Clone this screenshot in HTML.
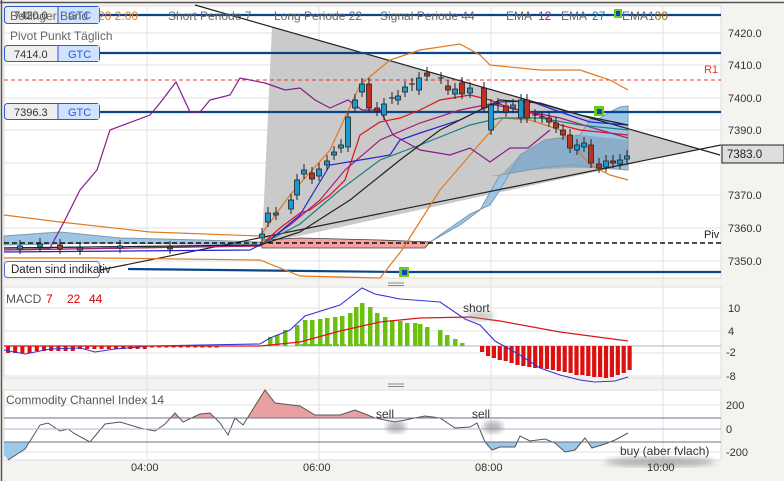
<!DOCTYPE html>
<html><head><meta charset="utf-8"><style>
html,body{margin:0;padding:0;background:#f4f3ef;}
svg{display:block;font-family:"Liberation Sans",sans-serif;}
</style></head><body>
<svg id="s" width="784" height="481" viewBox="0 0 784 481" xmlns="http://www.w3.org/2000/svg">
<rect x="0" y="0" width="784" height="481" fill="#f4f3ef"/>
<line x1="0" y1="2.5" x2="784" y2="2.5" stroke="#555" stroke-width="1.5"/>
<line x1="1.5" y1="0" x2="1.5" y2="481" stroke="#555" stroke-width="1.5"/>
<rect x="4" y="6" width="717" height="272" fill="#fff" stroke="#ddd"/>
<g stroke="#e2e2e2" stroke-width="1">
<line x1="4" y1="33" x2="721" y2="33"/><line x1="4" y1="65" x2="721" y2="65"/><line x1="4" y1="98" x2="721" y2="98"/><line x1="4" y1="130" x2="721" y2="130"/><line x1="4" y1="163" x2="721" y2="163"/><line x1="4" y1="195" x2="721" y2="195"/><line x1="4" y1="228" x2="721" y2="228"/><line x1="4" y1="261" x2="721" y2="261"/>
<line x1="147" y1="6" x2="147" y2="460"/><line x1="319" y1="6" x2="319" y2="460"/><line x1="491" y1="6" x2="491" y2="460"/><line x1="663" y1="6" x2="663" y2="460"/>
</g>
<polygon points="262,244 272,27 700,149" fill="#cacaca"/>
<polygon points="4,236 60,232 120,238 200,240 260,242 300,245 350,244 420,244 430,242 470,214 490,205 500,190 520,155 545,140 580,135 590,120 600,118 610,112 620,107 628,106 628,170 600,168 570,165 540,168 500,175 480,210 460,225 430,242 300,246 200,244 100,243 4,245" fill="#9dc6e6" stroke="#7f98aa"/>
<polygon points="500,176 520,155 545,140 580,135 628,140 628,166 600,168 570,168 530,170 490,176" fill="#7d9fb8" opacity="0.6"/>
<polygon points="262,240 300,238 380,240 430,242 425,248 300,248 262,248" fill="#f7a0a0" stroke="#444" stroke-width="0.8"/>
<line x1="195" y1="5" x2="720" y2="155" stroke="#222" stroke-width="1.2"/>
<line x1="100" y1="270" x2="721" y2="145" stroke="#222" stroke-width="1.2"/>
<line x1="4" y1="80" x2="721" y2="80" stroke="#e33" stroke-dasharray="4,3"/>
<line x1="4" y1="243" x2="721" y2="243" stroke="#111" stroke-width="1.6" stroke-dasharray="5,3"/>
<g stroke="#08458a" stroke-width="2.2"><line x1="100" y1="15" x2="721" y2="15"/><line x1="100" y1="53" x2="721" y2="53"/><line x1="100" y1="112" x2="721" y2="112"/><line x1="128" y1="269" x2="400" y2="272"/><line x1="400" y1="272" x2="721" y2="272"/></g>
<g fill="none" stroke-width="1.2">
<polyline stroke="#e07a20" points="4,215 60,222 150,232 260,236 290,195 330,150 360,85 390,60 420,50 460,44 480,55 490,65 540,70 580,70 610,80 628,90"/>
<polyline stroke="#e07a20" points="4,258 100,258 260,260 300,276 380,278 402,250 440,190 483,140 503,118 530,120 560,130 590,165 610,175 628,180"/>
<polyline stroke="#8a1a8a" points="4,248 50,248 65,220 80,190 97,170 110,130 150,115 160,103 176,82 190,112 200,112 210,100 230,95 240,78 265,83 285,90 300,88 315,100 330,108 348,100 362,110 380,110 393,135 420,150 450,155 470,148 490,162 510,148 528,148 550,130"/>
<polyline stroke="#dd1515" points="4,250 260,246 280,228 300,213 310,210 330,195 345,180 360,135 380,122 400,118 420,110 440,100 470,95 490,100 510,108 540,115 560,125 580,130 628,135"/>
<polyline stroke="#a0207a" points="4,250 260,246 290,225 320,200 345,170 380,140 420,123 460,110 490,104 520,110 560,118 600,130 628,138"/>
<polyline stroke="#2424d0" points="4,252 250,250 270,240 300,215 330,165 390,155 400,140 420,133 460,120 480,110 500,102 530,101 560,112 590,122 628,125"/>
<polyline stroke="#1e7e80" points="4,248 260,245 300,224 340,190 380,160 420,145 470,125 500,118 540,118 580,125 628,130"/>
<polyline stroke="#222" points="4,248 260,245 300,232 350,200 400,160 440,130 480,110 500,100 540,103 580,115 628,125"/>
</g>
<g id="candles"></g>
<rect x="594" y="106" width="10" height="10" fill="#6c2"/><rect x="597" y="109" width="5" height="5" fill="#1a3fc0"/>
<rect x="399" y="267" width="10" height="10" fill="#6c2"/><rect x="402" y="270" width="5" height="5" fill="#1a3fc0"/>
<rect x="614" y="9" width="8" height="9" fill="#6c2"/><rect x="616" y="11" width="4" height="5" fill="#1a3fc0"/>
<g font-size="11">
<rect x="4.5" y="6.5" width="95" height="17" rx="3" fill="#eee" stroke="#2a5bd0"/><rect x="58" y="7" width="41" height="16" fill="#cfe2ff"/><line x1="58" y1="7" x2="58" y2="23" stroke="#2a5bd0"/>
<text x="14" y="19" fill="#333">7420.0</text><text x="68" y="19" fill="#2a5bd0">GTC</text>
</g>
<g font-size="12" fill="#666">
<text x="10" y="20">Bollinger Band</text><text x="98" y="20" fill="#e07a20">20  2.00</text>
<text x="168" y="20">Short Periode  7</text><text x="274" y="20">Long Periode  22</text><text x="380" y="20">Signal Periode  44</text>
<text x="506" y="20">EMA</text><text x="538" y="20" fill="#b0206e">12</text><text x="561" y="20">EMA</text><text x="592" y="20" fill="#1e7e80">27</text><text x="622" y="20">EMA</text><text x="648" y="20" fill="#9a6a10">100</text>
<text x="10" y="40">Pivot Punkt  Täglich</text>
</g>
<g font-size="11">
<rect x="4.5" y="45.5" width="95" height="16" rx="3" fill="#eee" stroke="#2a5bd0"/><rect x="58" y="46" width="41" height="15" fill="#cfe2ff"/><line x1="58" y1="46" x2="58" y2="61" stroke="#2a5bd0"/>
<text x="14" y="58" fill="#333">7414.0</text><text x="68" y="58" fill="#2a5bd0">GTC</text>
<rect x="4.5" y="103.5" width="95" height="16" rx="3" fill="#eee" stroke="#2a5bd0"/><rect x="58" y="104" width="41" height="15" fill="#cfe2ff"/><line x1="58" y1="104" x2="58" y2="119" stroke="#2a5bd0"/>
<text x="14" y="116" fill="#333">7396.3</text><text x="68" y="116" fill="#2a5bd0">GTC</text>
<rect x="4.5" y="261.5" width="95" height="16" rx="3" fill="#fff" stroke="#2a5bd0" opacity="0.8"/>
<text x="11" y="273" fill="#222" font-size="11.5">Daten sind indikativ</text>
</g>
<text x="704" y="73" font-size="11" fill="#e33">R1</text>
<text x="704" y="238" font-size="11" fill="#222">Piv</text>
<g font-size="11" fill="#333">
<text x="728" y="37">7420.0</text><text x="728" y="69">7410.0</text><text x="728" y="102">7400.0</text><text x="728" y="134">7390.0</text><text x="728" y="199">7370.0</text><text x="728" y="232">7360.0</text><text x="728" y="265">7350.0</text>
</g>
<rect x="722" y="145" width="62" height="18" fill="#ddd" stroke="#222"/><text x="727" y="158" font-size="11.5" fill="#222">7383.0</text>
<g stroke="#888"><line x1="388" y1="283" x2="404" y2="283"/><line x1="388" y1="285.5" x2="404" y2="285.5"/><line x1="388" y1="384" x2="404" y2="384"/><line x1="388" y1="386.5" x2="404" y2="386.5"/></g>
<rect x="4" y="287" width="717" height="91" fill="#fff" stroke="#ddd"/>
<g stroke="#e2e2e2"><line x1="4" y1="308" x2="721" y2="308"/><line x1="4" y1="331" x2="721" y2="331"/><line x1="4" y1="353" x2="721" y2="353"/><line x1="4" y1="376" x2="721" y2="376"/>
<line x1="147" y1="287" x2="147" y2="378"/><line x1="319" y1="287" x2="319" y2="378"/><line x1="491" y1="287" x2="491" y2="378"/><line x1="663" y1="287" x2="663" y2="378"/></g>
<line x1="4" y1="346" x2="721" y2="346" stroke="#aab8cc"/>
<g id="macd"></g>
<polyline fill="none" stroke="#3434d8" stroke-width="1.1" points="4,350 25,354 50,349 80,348 95,352 115,349 150,346 200,345 260,344 270,338 290,330 305,316 340,305 362,288 375,294 400,299 440,302 465,319 480,325 495,341 520,355 540,368 560,375 580,380 595,382 615,381 628,377"/>
<polyline fill="none" stroke="#dd1515" stroke-width="1.2" points="4,346 260,346 300,342 340,331 380,322 420,318 470,317 500,321 560,332 628,341"/>
<g font-size="12"><text x="6" y="303" fill="#555">MACD</text><text x="46" y="303" fill="#d00">7</text><text x="67" y="303" fill="#d00">22</text><text x="89" y="303" fill="#d00">44</text></g>
<defs><filter id="b"><feGaussianBlur stdDeviation="3"/></filter>
<clipPath id="ab"><rect x="0" y="380" width="721" height="38"/></clipPath>
<clipPath id="bl"><rect x="0" y="442" width="721" height="30"/></clipPath></defs>
<ellipse cx="480" cy="316" rx="14" ry="5" fill="#999" opacity="0.5" filter="url(#b)"/>
<text x="463" y="312" font-size="12" fill="#333">short</text>
<g font-size="11" fill="#333"><text x="728" y="312">10</text><text x="728" y="335">4</text><text x="726" y="356">-2</text><text x="726" y="380">-8</text></g>
<rect x="4" y="390" width="717" height="70" fill="#fff" stroke="#ddd"/>
<g stroke="#e2e2e2"><line x1="4" y1="405" x2="721" y2="405"/><line x1="4" y1="452" x2="721" y2="452"/>
<line x1="147" y1="390" x2="147" y2="460"/><line x1="319" y1="390" x2="319" y2="460"/><line x1="491" y1="390" x2="491" y2="460"/><line x1="663" y1="390" x2="663" y2="460"/></g>
<g id="cci"></g>
<line x1="4" y1="418" x2="721" y2="418" stroke="#6a6f8a"/><line x1="4" y1="429" x2="721" y2="429" stroke="#aab8cc"/><line x1="4" y1="442" x2="721" y2="442" stroke="#6a6f8a"/>
<text x="6" y="404" font-size="12" fill="#555">Commodity Channel Index  14</text>
<ellipse cx="396" cy="427" rx="10" ry="6" fill="#888" opacity="0.6" filter="url(#b)"/>
<ellipse cx="493" cy="427" rx="10" ry="6" fill="#888" opacity="0.6" filter="url(#b)"/>
<ellipse cx="660" cy="462" rx="55" ry="5" fill="#888" opacity="0.6" filter="url(#b)"/>
<text x="376" y="418" font-size="12" fill="#333">sell</text><text x="472" y="418" font-size="12" fill="#333">sell</text>
<text x="620" y="455" font-size="12" fill="#333">buy (aber fvlach)</text>
<g font-size="11" fill="#333"><text x="726" y="409">200</text><text x="726" y="433">0</text><text x="726" y="456">-200</text></g>
<g font-size="11" fill="#333"><text x="131" y="471">04:00</text><text x="303" y="471">06:00</text><text x="475" y="471">08:00</text><text x="647" y="471">10:00</text></g>
</svg>
<script>
var NS="http://www.w3.org/2000/svg";
function el(p,t,a){var e=document.createElementNS(NS,t);for(var k in a)e.setAttribute(k,a[k]);p.appendChild(e);return e;}
var c=document.getElementById("candles");
var cd=[[20,246,249,'b'],[40,244,247,'b'],[60,245,249,'r'],[80,248,250,'b'],[120,246,248,'b'],[170,247,249,'r'],[262,234,238,'b'],[268,213,222,'b'],[276,213,215,'b'],[291,200,209,'b'],[297,180,195,'b'],[304,170,174,'b'],[312,173,179,'r'],[319,169,176,'b'],[327,161,165,'b'],[334,152,155,'b'],[341,145,148,'b'],[348,117,147,'b'],[355,100,108,'b'],[362,84,92,'b'],[369,84,108,'r'],[377,108,111,'r'],[384,104,115,'b'],[392,98,99,'k'],[398,96,100,'b'],[405,87,92,'b'],[412,84,86,'k'],[419,78,90,'b'],[427,73,76,'r'],[441,78,79,'k'],[448,86,90,'r'],[455,89,94,'b'],[462,83,94,'r'],[470,88,93,'b'],[484,88,108,'r'],[491,105,130,'b'],[498,104,106,'k'],[506,106,112,'r'],[513,105,108,'b'],[521,100,118,'b'],[527,100,118,'r'],[535,115,117,'k'],[542,117,118,'k'],[549,118,122,'r'],[556,123,128,'r'],[563,130,135,'r'],[570,135,148,'r'],[577,145,150,'b'],[584,143,147,'b'],[591,145,163,'r'],[599,164,168,'r'],[606,161,167,'b'],[613,161,163,'r'],[620,160,164,'b'],[627,156,159,'b']];
cd.forEach(function(d){var x=d[0];el(c,'line',{x1:x,x2:x,y1:d[1]-6,y2:d[2]+5,stroke:'#222'});
if(d[3]=='k'){el(c,'line',{x1:x-3,x2:x+3,y1:d[1],y2:d[1],stroke:'#222'});}
else el(c,'rect',{x:x-2.5,y:d[1],width:5,height:Math.max(2,d[2]-d[1]),fill:d[3]=='b'?'#1a9bd0':'#c03020',stroke:'#222','stroke-width':0.8});});
var m=document.getElementById("macd");
for(var i=0;i<30;i++){var x=6+i*7.2;var h=Math.max(0.5,(i<4?7:i<10?5:i<20?3:1.5));el(m,'rect',{x:x,y:346,width:4,height:h,fill:'#dd1010'});}
for(var i=0;i<10;i++){var x=300+i*7;el(m,'rect',{x:x,y:344,width:4,height:2,fill:'#7c2'});}
var gx=[270,277,285,297,305,312,320,327,335,342,350,356,362,370,377,385,392,400,407,415,420,427,440,447,455,462],gy=[337,335,330,325,320,320,319,318,317,316,313,307,303,307,313,317,320,321,323,323,324,327,330,335,339,343];
for(var i=0;i<gx.length;i++)el(m,'rect',{x:gx[i]-2,y:gy[i],width:4.5,height:346-gy[i],fill:'#6cc010'});
var rb=[352,356,358,360,361,363,365,366,367,368,368,369,370,371,372,373,375,375,376,377,377,378,377,375,373,370];
for(var i=0;i<rb.length;i++){var x=480+i*5.9;el(m,'rect',{x:x,y:346,width:4.2,height:rb[i]-346,fill:'#dd1010'});}
var pts="8,460 25,449 40,425 48,423 60,431 68,429 75,434 90,442 105,424 120,422 140,428 155,431 165,424 175,413 183,422 200,414 210,413 220,423 228,435 235,418 243,425 265,390 275,403 300,406 315,415 340,415 355,410 375,418 395,422 410,419 425,416 440,418 455,428 470,427 477,423 485,442 492,450 500,447 515,447 520,436 530,441 545,439 555,443 565,452 575,450 585,438 592,448 605,444 615,440 628,433";
var g=document.getElementById("cci");
el(g,'polygon',{points:"8,418 "+pts+" 628,418","fill":"#e8a0a0","clip-path":"url(#ab)"});
el(g,'polygon',{points:"4,442 4,455 "+pts+" 628,442","fill":"#9cc8ea","clip-path":"url(#bl)"});
el(g,'polyline',{points:pts,fill:'none',stroke:'#555','stroke-width':1});
</script>
</body></html>
